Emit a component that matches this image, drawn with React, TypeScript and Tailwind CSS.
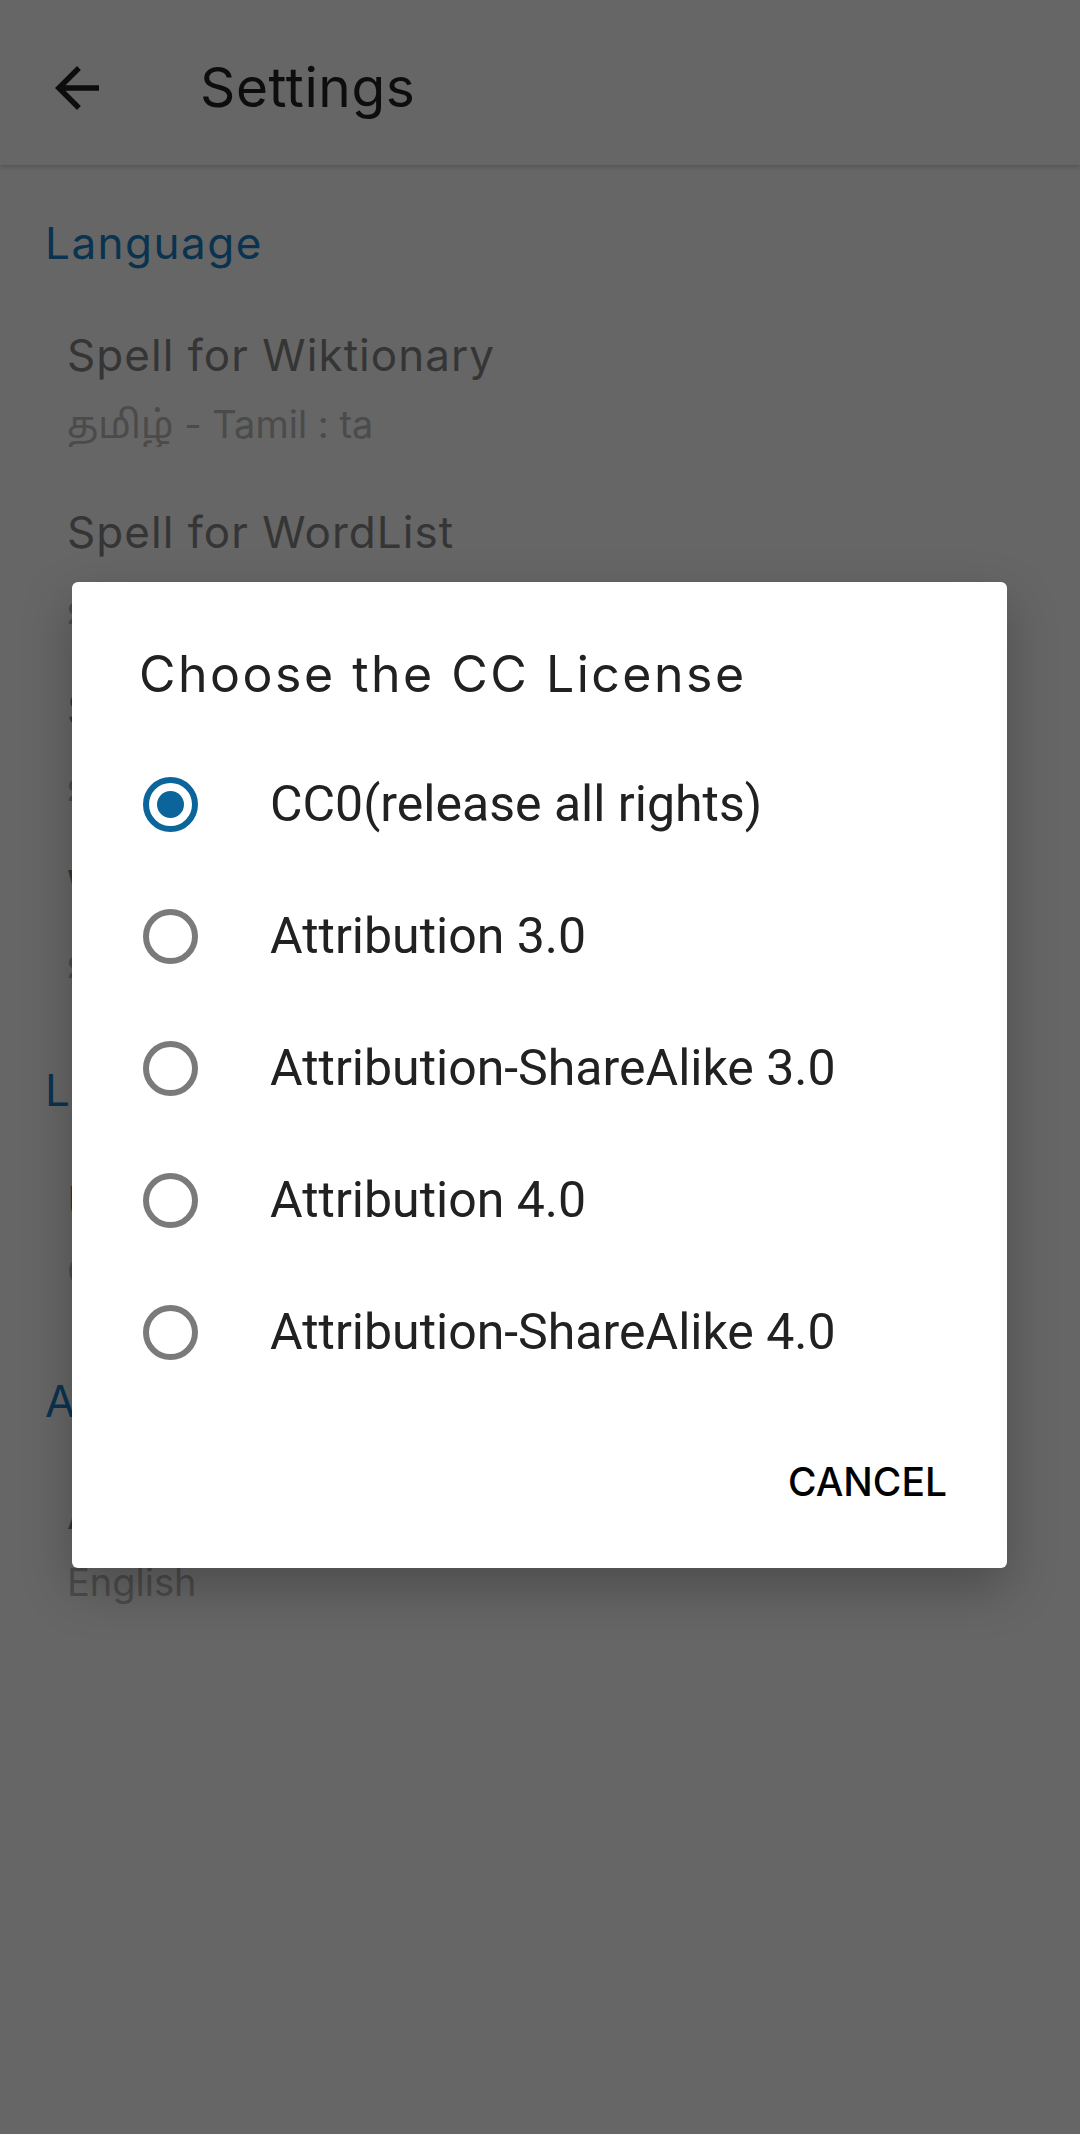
import React from "react";

const ui = { fontFamily: "Inter, 'Noto Sans', 'Noto Sans Tamil', 'Lohit Tamil', sans-serif" };
const roboto = { fontFamily: "Roboto, 'Liberation Sans', sans-serif" };

function Category({ label, top }: { label: string; top: number }) {
  return (
    <div
      className="h-[52px] mb-[31px] pl-[45px] text-[44px] leading-[52px] tracking-[1.5px] text-[#0a3350] whitespace-nowrap"
      style={{ ...ui, marginTop: top }}
    >
      {label}
    </div>
  );
}

function Item({ title, summary }: { title: string; summary: string }) {
  return (
    <div className="pt-[29px] pb-[30px] pl-[67px] whitespace-nowrap">
      <div className="h-[52px] text-[44px] leading-[52px] tracking-[1.05px] text-[#353535]" style={ui}>
        {title}
      </div>
      <div className="mt-[20px] h-[46px] text-[38px] leading-[46px] text-[#4b4b4b] overflow-hidden" style={ui}>
        {summary}
      </div>
    </div>
  );
}

function Radio({ checked }: { checked: boolean }) {
  return checked ? (
    <div className="w-[55px] h-[55px] rounded-full border-[6px] border-[#0b659b] flex items-center justify-center">
      <div className="w-[27px] h-[27px] rounded-full bg-[#0b659b]" />
    </div>
  ) : (
    <div className="w-[55px] h-[55px] rounded-full border-[6px] border-[#7a7a7a]" />
  );
}

const options = [
  "CC0(release all rights)",
  "Attribution 3.0",
  "Attribution-ShareAlike 3.0",
  "Attribution 4.0",
  "Attribution-ShareAlike 4.0",
];

export default function App() {
  return (
    <div className="relative w-[1080px] h-[2134px] bg-[#666666] overflow-hidden">
      {/* Toolbar */}
      <div className="relative h-[165px] bg-[#666666] shadow-[0_2px_4px_rgba(0,0,0,0.18)] flex items-center">
        <svg className="absolute left-[44px] top-[55px]" width="66" height="66" viewBox="0 0 24 24">
          <path
            fill="#0d0d0d"
            d="M20 11H7.83l5.59-5.59L12 4l-8 8 8 8 1.41-1.41L7.83 13H20v-2z"
          />
        </svg>
        <div
          className="ml-[200px] text-[55px] leading-[66px] tracking-[0.6px] text-[#0d0d0d] mt-[8px]"
          style={ui}
        >
          Settings
        </div>
      </div>

      {/* Preference list */}
      <div>
        <Category label="Language" top={52} />
        <Item title="Spell for Wiktionary" summary="தமிழ் - Tamil : ta" />
        <Item title="Spell for WordList" summary="தமிழ் - Tamil : ta" />
        <Item title="Spell for Word" summary="தமிழ் - Tamil : ta" />
        <Item title="Wiktionary" summary="தமிழ் - Tamil : ta" />
        <Category label="License" top={56} />
        <Item title="Upload license" summary="CC0" />
        <Category label="App" top={51} />
        <Item title="App Language" summary="English" />
      </div>

      {/* Dialog */}
      <div className="absolute left-[72px] top-[582px] w-[935px] h-[986px] bg-white rounded-[6px] shadow-[0_20px_50px_rgba(0,0,0,0.25)] flex flex-col">
        <div
          className="pt-[62px] pl-[67px] h-[122px] text-[50px] leading-[60px] tracking-[2.5px] text-[#212121] whitespace-nowrap"
          style={ui}
        >
          Choose the CC License
        </div>
        <div className="mt-[34px] flex flex-col">
          {options.map((o, i) => (
            <div key={o} className="h-[132px] flex items-center pl-[71px]">
              <Radio checked={i === 0} />
              <div className="ml-[72px] text-[50px] text-[#212121] whitespace-nowrap" style={roboto}>
                {o}
              </div>
            </div>
          ))}
        </div>
        <div className="mt-[34px] h-[100px] flex items-center justify-end pr-[60px]">
          <div className="text-[39px] font-medium text-black" style={ui}>
            CANCEL
          </div>
        </div>
      </div>
    </div>
  );
}
